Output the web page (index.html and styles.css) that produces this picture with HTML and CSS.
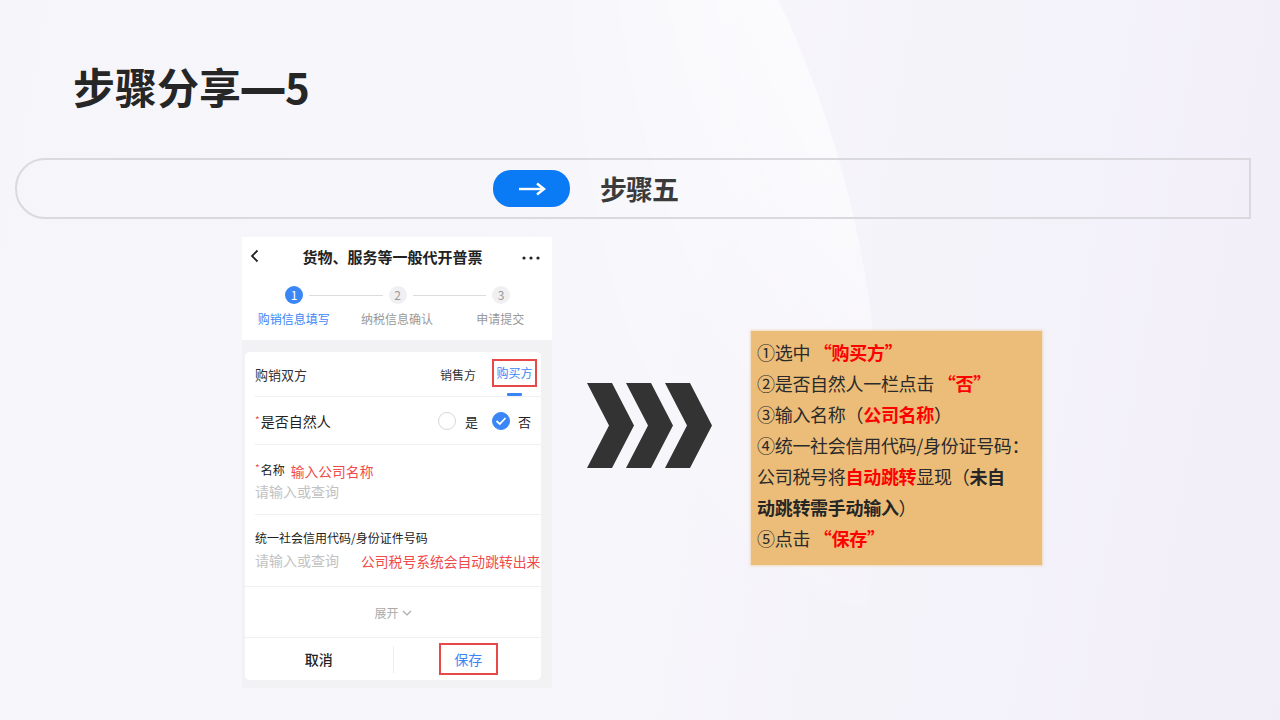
FILE: index.html
```html
<!DOCTYPE html>
<html lang="zh-CN">
<head>
<meta charset="utf-8">
<title>步骤分享—5</title>
<link rel="stylesheet" href="styles.css">
</head>
<body>
<div class="bg"><div class="bg-arc"></div></div>
<div class="page">
  <h1 class="title">步骤分享<span class="dash">—</span>5</h1>

  <div class="step-bar">
    <div class="pill">
      <svg width="28" height="14" viewBox="0 0 28 14"><path d="M1 7H25" stroke="#fff" stroke-width="2.4" fill="none"/><path d="M19 1.5L26 7L19 12.5" stroke="#fff" stroke-width="2.4" fill="none" stroke-linejoin="miter"/></svg>
    </div>
    <div class="step-label">步骤五</div>
  </div>

  <div class="content">
    <div class="phone">
      <div class="ph-head">
        <div class="nav">
          <svg class="back" width="10" height="14" viewBox="0 0 10 14"><path d="M7.5 1.5L2 7L7.5 12.5" stroke="#222" stroke-width="1.8" fill="none"/></svg>
          <div class="nav-title">货物、服务等一般代开普票</div>
          <svg class="dots" width="18" height="4" viewBox="0 0 18 4"><circle cx="2" cy="2" r="1.6" fill="#222"/><circle cx="9" cy="2" r="1.6" fill="#222"/><circle cx="16" cy="2" r="1.6" fill="#222"/></svg>
        </div>
        <div class="steps-track">
          <div class="dot dot-active">1</div>
          <div class="track-line"></div>
          <div class="dot">2</div>
          <div class="track-line"></div>
          <div class="dot">3</div>
        </div>
        <div class="steps-labels">
          <div class="slbl slbl-active">购销信息填写</div>
          <div class="slbl">纳税信息确认</div>
          <div class="slbl">申请提交</div>
        </div>
      </div>
      <div class="ph-body">
        <div class="card">
          <div class="row row-parties sep-inset">
            <div class="row-label">购销双方</div>
            <div class="tabs">
              <div class="tab">销售方</div>
              <div class="tab tab-active">购买方<span class="tab-bar"></span></div>
            </div>
          </div>
          <div class="row row-person sep-inset">
            <div class="row-label big"><span class="star">*</span>是否自然人</div>
            <div class="radios">
              <span class="radio"></span><span class="radio-text">是</span>
              <span class="radio radio-on"><svg width="12" height="10" viewBox="0 0 12 10"><path d="M1.5 5L4.8 8L10.5 2" stroke="#fff" stroke-width="1.8" fill="none"/></svg></span><span class="radio-text radio-text-no">否</span>
            </div>
          </div>
          <div class="row row-field sep-inset">
            <div class="field-top">
              <div class="field-label"><span class="star">*</span>名称</div>
              <div class="annot annot-name">输入公司名称</div>
            </div>
            <div class="placeholder">请输入或查询</div>
          </div>
          <div class="row row-field row-code sep-full">
            <div class="field-label">统一社会信用代码/身份证件号码</div>
            <div class="field-bottom">
              <div class="placeholder">请输入或查询</div>
              <div class="annot annot-code">公司税号系统会自动跳转出来</div>
            </div>
          </div>
          <div class="row row-expand sep-full">
            <span>展开</span>
            <svg width="10" height="6" viewBox="0 0 10 6"><path d="M1 1L5 5L9 1" stroke="#aaa" stroke-width="1.2" fill="none"/></svg>
          </div>
          <div class="row row-actions">
            <div class="act act-cancel">取消</div>
            <div class="act-div"></div>
            <div class="act act-save"><span class="save-box">保存</span></div>
          </div>
        </div>
      </div>
    </div>

    <svg class="chevrons" width="125" height="85" viewBox="0 0 125 85">
      <polygon points="0,0 25,0 47,42.5 25,85 0,85 22,42.5" fill="#333"/>
      <polygon points="39,0 64,0 86,42.5 64,85 39,85 61,42.5" fill="#333"/>
      <polygon points="78,0 103,0 125,42.5 103,85 78,85 100,42.5" fill="#333"/>
    </svg>

    <div class="note">
      <div class="ln">①选中 <span class="red">“购买方”</span></div>
      <div class="ln">②是否自然人一栏点击 <span class="red">“否”</span></div>
      <div class="ln">③输入名称（<span class="red">公司名称</span>）</div>
      <div class="ln">④统一社会信用代码/身份证号码：</div>
      <div class="ln">公司税号将<span class="red">自动跳转</span>显现（<b>未自</b></div>
      <div class="ln"><b>动跳转需手动输入</b>）</div>
      <div class="ln">⑤点击 <span class="red">“保存”</span></div>
    </div>
  </div>
</div>
</body>
</html>
```

FILE: styles.css
```css
* { box-sizing: border-box; }
html, body { margin: 0; padding: 0; overflow: hidden; }
body {
  width: 1280px;
  height: 720px;
  position: relative;
  font-family: "Noto Sans CJK SC", "Noto Sans", sans-serif;
  background: linear-gradient(100deg, #f6f5fa 0%, #f7f6fb 50%, #f1eef8 100%);
  color: #333;
}
.bg {
  position: absolute;
  left: 0;
  top: 0;
  width: 1280px;
  height: 720px;
  overflow: hidden;
  z-index: 0;
}
.bg-arc {
  position: absolute;
  left: -1220px;
  top: -600px;
  width: 2100px;
  height: 2100px;
  border-radius: 50%;
  background: linear-gradient(90deg, rgba(255,255,255,0) 83%, rgba(255,255,255,0.85) 100%);
  -webkit-mask-image: linear-gradient(to bottom, #000 28%, rgba(0,0,0,0.25) 50%, transparent 62%);
  mask-image: linear-gradient(to bottom, #000 28%, rgba(0,0,0,0.25) 50%, transparent 62%);
}
.page {
  position: relative;
  z-index: 1;
  display: flex;
  flex-direction: column;
}
.title {
  margin: 64px 0 0 73px;
  height: 44px;
  font-size: 42px;
  line-height: 44px;
  font-weight: 700;
  color: #262626;
  letter-spacing: 0;
  white-space: nowrap;
}
.dash {
  font-family: "DejaVu Sans", sans-serif;
  font-weight: 700;
  font-size: 48px;
  margin: 0 -2px 0 -2px;
}
.step-bar {
  margin: 50px 0 0 15px;
  width: 1236px;
  height: 61px;
  border: 2px solid #d9d9de;
  border-radius: 30px 0 0 30px;
  display: flex;
  align-items: center;
  padding-left: 476px;
}
.pill {
  width: 77px;
  height: 37px;
  border-radius: 18px;
  background: #0b7af5;
  display: flex;
  align-items: center;
  justify-content: center;
}
.step-label {
  margin-left: 30px;
  font-size: 27px;
  font-weight: 700;
  color: #3b3b3b;
  letter-spacing: -1px;
}
.content {
  display: flex;
  align-items: flex-start;
  margin: 18px 0 0 242px;
}
/* phone */
.phone {
  width: 310px;
  background: #f2f2f5;
}
.ph-head {
  background: #fff;
  height: 103px;
}
.nav {
  height: 38px;
  display: flex;
  align-items: center;
  padding: 0 12px 0 8px;
}
.nav .back { flex: none; }
.nav-title {
  flex: 1;
  text-align: center;
  font-size: 15px;
  font-weight: 700;
  color: #222;
  padding-left: 3px;
}
.nav .dots { flex: none; margin-top: 4px; }
.steps-track {
  display: flex;
  align-items: center;
  margin-top: 11px;
  padding: 0 42px 0 43px;
  height: 18px;
}
.dot {
  width: 18px;
  height: 18px;
  border-radius: 50%;
  background: #f0f0f2;
  color: #999;
  font-size: 12px;
  line-height: 18px;
  text-align: center;
  flex: none;
}
.dot-active { background: #3b86f5; color: #fff; }
.track-line {
  flex: 1;
  height: 1px;
  background: #dcdcdc;
  margin: 0 6px;
}
.steps-labels {
  display: grid;
  grid-template-columns: repeat(3, 1fr);
  margin-top: 7px;
}
.slbl {
  text-align: center;
  font-size: 12px;
  line-height: 16px;
  color: #999;
}
.slbl-active { color: #3b86f5; }
.ph-body {
  padding: 12px 11px 8px 3px;
}
.card {
  background: #fff;
  border-radius: 5px;
  display: flex;
  flex-direction: column;
}
.row {
  position: relative;
  display: flex;
  align-items: center;
  padding: 0 10px;
}
.sep-inset::after {
  content: "";
  position: absolute;
  left: 10px;
  right: 0;
  bottom: 0;
  height: 1px;
  background: #f0f0f2;
}
.sep-full::after {
  content: "";
  position: absolute;
  left: 0;
  right: 0;
  bottom: 0;
  height: 1px;
  background: #f0f0f2;
}
.row-parties { height: 45px; justify-content: space-between; padding-right: 4px; }
.row-label { font-size: 13px; color: #333; margin-top: -1px; }
.row-label.big { font-size: 14px; color: #222; }
.star { color: #e85050; font-size: 10px; vertical-align: 3px; margin-right: 1px; }
.tabs { display: flex; align-items: center; }
.tab { font-size: 12px; color: #333; }
.tab-active {
  position: relative;
  margin-left: 16px;
  width: 45px;
  height: 28px;
  border: 2px solid #e84848;
  color: #3b86f5;
  text-align: center;
  line-height: 24px;
  margin-top: -3px;
}
.tab-bar {
  position: absolute;
  left: 13px;
  bottom: -11px;
  width: 15px;
  height: 3px;
  border-radius: 1px;
  background: #3b86f5;
}
.row-person { height: 48px; justify-content: space-between; }
.radios { display: flex; align-items: center; }
.radio {
  width: 18px;
  height: 18px;
  border-radius: 50%;
  border: 1px solid #d8d8d8;
  display: inline-flex;
  align-items: center;
  justify-content: center;
}
.radio-on { background: #3b86f5; border-color: #3b86f5; margin-left: 14px; }
.radio-text { font-size: 13px; color: #222; margin-left: 9px; }
.radio-text-no { margin-left: 8px; }
.row-field {
  flex-direction: column;
  align-items: flex-start;
  height: 70px;
  padding-top: 14px;
}
.field-top { display: flex; align-items: flex-start; height: 21px; }
.field-label { font-size: 12px; color: #222; line-height: 18px; white-space: nowrap; }
.annot { color: #f04a4a; font-size: 13.8px; line-height: 18px; white-space: nowrap; }
.annot-name { margin-left: 6px; margin-top: 3px; }
.placeholder { font-size: 14px; color: #c2c2c2; line-height: 20px; margin-top: 1px; white-space: nowrap; flex: none; }
.row-code { height: 72px; padding-top: 14px; }
.field-bottom { display: flex; align-items: center; width: 100%; margin-top: 3px; }
.field-bottom .placeholder { margin-top: 0; }
.annot-code { margin-left: 22px; margin-top: 1px; }
.row-expand {
  height: 51px;
  justify-content: center;
  font-size: 12px;
  color: #aaa;
  gap: 3px;
}
.row-actions { height: 42px; padding: 0; }
.act {
  flex: 1;
  text-align: center;
  font-size: 14px;
}
.act-cancel { color: #222; font-weight: 500; }
.act-div { width: 1px; height: 27px; background: #eeeeee; }
.act-save { color: #3b86f5; }
.save-box {
  display: inline-block;
  width: 59px;
  height: 32px;
  line-height: 28px;
  border: 2px solid #e84848;
  margin-left: 2px;
}
/* chevrons */
.chevrons {
  flex: none;
  margin: 146px 0 0 35px;
}
/* note box */
.note {
  flex: none;
  margin: 94px 0 0 39px;
  width: 291px;
  height: 234px;
  background: #ecbd78;
  box-shadow: 0 0 2px 1px rgba(236, 189, 120, 0.5);
  padding: 6px 0 0 6px;
  font-size: 18px;
  line-height: 31px;
  color: #2a2a2a;
}
.ln { white-space: nowrap; letter-spacing: -0.3px; }
.red { color: #ff0000; font-weight: 700; }
.note b { font-weight: 700; color: #262626; }
```
